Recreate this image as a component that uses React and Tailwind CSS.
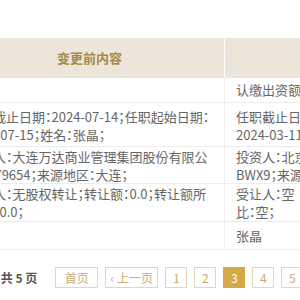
import React from "react";

const F = "font-['Noto_Sans_CJK_JP','Noto_Sans_CJK_SC',sans-serif] [font-feature-settings:'halt']";

function Row({ left, right, h, pt }) {
  return (
    <div className={`flex border-b border-[#ececec] ${h}`}>
      <div className={`w-[270px] shrink-0 pl-[12px] ${pt} border-r border-[#ececec]`}>
        {left.map((l, i) => (
          <div key={i} className="whitespace-nowrap leading-[18px]">{l}</div>
        ))}
      </div>
      <div className={`w-[300px] shrink-0 pl-[11px] ${pt}`}>
        {right.map((l, i) => (
          <div key={i} className="whitespace-nowrap leading-[18px]">{l}</div>
        ))}
      </div>
    </div>
  );
}

function PageBtn({ children, active, w }) {
  return (
    <div
      className={`h-[21px] ${w} shrink-0 flex items-center justify-center text-[12px] border ${
        active ? "bg-[#d6a948] border-[#d6a948] text-white" : "border-[#e3d7bb] text-[#c9ac70] bg-white"
      }`}
    >
      {children}
    </div>
  );
}

export default function App() {
  return (
    <div className={`w-[300px] h-[300px] overflow-hidden bg-white ${F} text-[13px] text-[#666]`}>
      <div className="h-[38px]" />
      <div className="ml-[-45px] w-[570px]">
        <div className="flex h-[40px] bg-[#ebe5da]">
          <div className="w-[270px] shrink-0 flex items-center justify-center border-r border-white font-bold text-[#a8884a] text-[13px]">
            变更前内容
          </div>
          <div className="w-[300px] shrink-0 flex items-center justify-center font-bold text-[#a8884a]">
            变更后内容
          </div>
        </div>
        <Row h="h-[25px]" pt="pt-[3px]" left={[""]} right={["认缴出资额(万元)：3000"]} />
        <Row
          h="h-[44px]"
          pt="pt-[5px]"
          left={["任职截止日期：2024-07-14；任职起始日期：", "2021-07-15；姓名：张晶；"]}
          right={["任职截止日期：", "2024-03-11"]}
        />
        <Row
          h="h-[37px]"
          pt="pt-[1px]"
          left={["投资人：大连万达商业管理集团股份有限公", "司2279654；来源地区：大连；"]}
          right={["投资人：北京", "BWX9；来源"]}
        />
        <Row
          h="h-[38px]"
          pt="pt-[1px]"
          left={["出让人：无股权转让；转让额：0.0；转让额所", "占比：0.0；"]}
          right={["受让人：空", "比：空；"]}
        />
        <Row h="h-[28px]" pt="pt-[5px]" left={["张晶"]} right={["张晶"]} />
      </div>
      <div className="flex items-center mt-[17px] ml-[-14px] gap-[7px]">
        <div className="whitespace-nowrap font-bold text-[#555] text-[12px] mr-[11px]">页 共 5 页</div>
        <PageBtn w="w-[43px]">首页</PageBtn>
        <PageBtn w="w-[53px]">‹ 上一页</PageBtn>
        <PageBtn w="w-[22px]">1</PageBtn>
        <PageBtn w="w-[22px]">2</PageBtn>
        <PageBtn w="w-[22px]" active>3</PageBtn>
        <PageBtn w="w-[22px]">4</PageBtn>
        <PageBtn w="w-[22px]">5</PageBtn>
      </div>
    </div>
  );
}
